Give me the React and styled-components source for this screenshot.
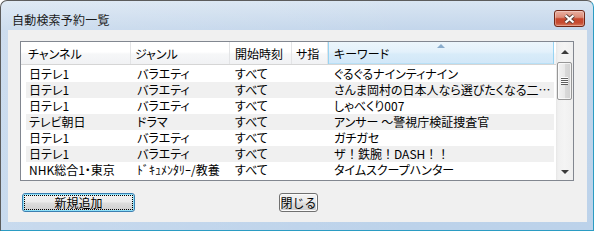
import React from "react";
import styled, { createGlobalStyle } from "styled-components";

const GlobalStyle = createGlobalStyle`
  html, body { margin: 0; padding: 0; background: #ffffff; }
  body {
    font-family: "Noto Sans CJK JP", "Noto Sans", sans-serif;
    font-size: 12px;
    color: #000;
  }
  * { box-sizing: border-box; }
`;

const Window = styled.div`
  width: 594px;
  height: 231px;
  border: 1px solid;
  border-color: #5c5c5c #2b9cc3 #2b9cc3 #5c5c5c;
  border-radius: 7px 7px 0 0;
  background:
    linear-gradient(90deg, rgba(255, 255, 255, 0.18) 0%, rgba(255, 255, 255, 0) 70%),
    linear-gradient(180deg, #d9e5f2 0px, #c3d6eb 29px, #bcd2ea 100%);
  display: flex;
  flex-direction: column;
`;

const TitleBar = styled.div`
  height: 29px;
  flex: none;
  display: flex;
  align-items: flex-start;
  justify-content: space-between;
  padding: 0 8px 0 11px;
`;

const TitleText = styled.div`
  margin-top: 10px;
  line-height: 17px;
  font-size: 12px;
  color: #1a1a1a;
  letter-spacing: 0.2px;
`;

const CloseButton = styled.div`
  margin-top: 9px;
  width: 31px;
  height: 17px;
  border: 1px solid #6f2616;
  border-radius: 3px;
  background: linear-gradient(
    180deg,
    #eab0a2 0%,
    #dc8c78 42%,
    #c8472d 52%,
    #c54b31 78%,
    #db7a5e 100%
  );
  box-shadow: inset 0 0 0 1px rgba(255, 255, 255, 0.3);
  display: flex;
  align-items: center;
  justify-content: center;
`;

const ClientWrap = styled.div`
  flex: 1;
  display: flex;
  padding: 0 6px 8px 7px;
`;

const Client = styled.div`
  flex: 1;
  background: #f0f0f0;
  padding: 11px 13px 0 12px;
  display: flex;
  flex-direction: column;
`;

const List = styled.div`
  width: 554px;
  height: 140px;
  flex: none;
  border: 1px solid #828790;
  background: #ffffff;
  display: flex;
`;

const ListBody = styled.div`
  flex: 1;
  display: flex;
  flex-direction: column;
  overflow: hidden;
`;

const COLS_HEADER = "110px 99px 62px 36px 226px";
const COLS_ROW = "105px 99px 62px 36px 226px";

const Header = styled.div`
  height: 23px;
  flex: none;
  display: grid;
  grid-template-columns: ${COLS_HEADER};
  background: linear-gradient(180deg, #ffffff 0%, #ffffff 45%, #f6f7f8 55%, #f1f2f4 100%);
  border-bottom: 1px solid #d5d5d5;
  margin-bottom: 1px;
`;

const HeaderCell = styled.div`
  position: relative;
  display: flex;
  align-items: center;
  padding-left: ${(p) => p.$pad}px;
  border-right: 1px solid #e3e4e6;
  white-space: nowrap;
  overflow: hidden;
  font-feature-settings: "palt";
  ${(p) =>
    p.$active &&
    `
    border-right: none;
    background: linear-gradient(180deg, #ecf6fc 0%, #e3f1fb 45%, #d8ecf9 55%, #d1e7f8 100%);
    box-shadow: inset 1px 0 0 #97d4f3, inset -1px 0 0 #97d4f3, inset 0 -1px 0 #b8e0f6;
  `}
`;

const SortArrow = styled.span`
  position: absolute;
  top: 2px;
  left: 50%;
  transform: translateX(-50%);
  width: 0;
  height: 0;
  border-left: 4px solid transparent;
  border-right: 4px solid transparent;
  border-bottom: 4px solid #8aaccc;
`;

const Rows = styled.div`
  display: flex;
  flex-direction: column;
`;

const Row = styled.div`
  margin-left: 5px;
  width: 528px;
  height: 16px;
  flex: none;
  display: grid;
  grid-template-columns: ${COLS_ROW};
  background: ${(p) => (p.$alt ? "#f0f0f0" : "transparent")};
  line-height: 16px;
`;

const Cell = styled.div`
  padding-left: ${(p) => p.$pad}px;
  white-space: nowrap;
  overflow: hidden;
  font-feature-settings: ${(p) => (p.$fixed ? "normal" : '"palt"')};
`;

const ScrollBar = styled.div`
  width: 17px;
  flex: none;
  display: flex;
  flex-direction: column;
  background: linear-gradient(90deg, #e6e6e6 0px, #f0f0f0 2px, #f4f4f4 50%, #efefef 100%);
`;

const ScrollButton = styled.div`
  height: 17px;
  flex: none;
  display: flex;
  align-items: center;
  justify-content: center;
`;

const Arrow = styled.span`
  width: 0;
  height: 0;
  border-left: 4px solid transparent;
  border-right: 4px solid transparent;
  ${(p) =>
    p.$down
      ? "border-top: 4px solid #3c3c3c; margin-top: 1px;"
      : "border-bottom: 4px solid #3c3c3c; margin-top: 2px;"}
`;

const Thumb = styled.div`
  margin: 3px 1px 0 1px;
  height: 38px;
  flex: none;
  border: 1px solid #979797;
  border-radius: 2px;
  background: linear-gradient(90deg, #f3f3f3 0%, #e9e9e9 50%, #dadada 51%, #d2d2d2 100%);
  box-shadow: inset 0 0 0 1px rgba(255, 255, 255, 0.7);
  display: flex;
  align-items: center;
  justify-content: center;
`;

const Grip = styled.span`
  width: 7px;
  height: 8px;
  background: repeating-linear-gradient(180deg, #fdfdfd 0 1px, #5f5f5f 1px 2px);
`;

const ScrollSpace = styled.div`
  flex: 1;
`;

const ButtonRow = styled.div`
  display: flex;
  margin-top: 12px;
  padding-left: 2px;
`;

const PushButton = styled.button`
  position: relative;
  width: ${(p) => p.$w}px;
  height: 19px;
  margin-left: ${(p) => p.$ml || 0}px;
  padding: 0;
  border: 1px solid ${(p) => (p.$default ? "#3c7fb1" : "#707070")};
  border-radius: 3px;
  background: linear-gradient(180deg, #f2f2f2 0%, #ebebeb 48%, #dddddd 52%, #cfcfcf 100%);
  box-shadow: inset 0 0 0 1px ${(p) => (p.$default ? "#8fe2fa" : "#fbfbfb")};
  font-family: "Noto Sans CJK JP", "Noto Sans", sans-serif;
  font-size: 12px;
  line-height: 17px;
  color: #000;
  text-align: center;
  ${(p) =>
    p.$default &&
    `
    &::after {
      content: "";
      position: absolute;
      top: 1px; left: 1px; right: 1px; bottom: 1px;
      border: 1px dotted #000;
    }
  `}
`;

const rows = [
  ["日テレ1", "バラエティ", "すべて", "", "ぐるぐるナインティナイン"],
  ["日テレ1", "バラエティ", "すべて", "", "さんま岡村の日本人なら選びたくなる二…"],
  ["日テレ1", "バラエティ", "すべて", "", "しゃべくり007"],
  ["テレビ朝日", "ドラマ", "すべて", "", "アンサー ～警視庁検証捜査官"],
  ["日テレ1", "バラエティ", "すべて", "", "ガチガセ"],
  ["日テレ1", "バラエティ", "すべて", "", "ザ！鉄腕！DASH！！", true],
  ["NHK総合1・東京", "ﾄﾞｷｭﾒﾝﾀﾘｰ/教養", "すべて", "", "タイムスクープハンター"],
];

const headers = [
  { label: "チャンネル", pad: 7 },
  { label: "ジャンル", pad: 4 },
  { label: "開始時刻", pad: 5 },
  { label: "サ指", pad: 4 },
  { label: "キーワード", pad: 6, active: true },
];

const rowPads = [3, 6, 5, 4, 6];

function CloseGlyph() {
  return (
    <svg width="13" height="10" viewBox="0 0 13 10">
      <path d="M2.5 1.5 L10.5 8.5 M10.5 1.5 L2.5 8.5" stroke="#5b403a" strokeWidth="4" />
      <path d="M2.5 1.5 L10.5 8.5 M10.5 1.5 L2.5 8.5" stroke="#ffffff" strokeWidth="2.2" />
    </svg>
  );
}

export default function App() {
  return (
    <>
      <GlobalStyle />
      <Window>
        <TitleBar>
          <TitleText>自動検索予約一覧</TitleText>
          <CloseButton>
            <CloseGlyph />
          </CloseButton>
        </TitleBar>
        <ClientWrap>
          <Client>
            <List>
              <ListBody>
                <Header>
                  {headers.map((h) => (
                    <HeaderCell key={h.label} $pad={h.pad} $active={h.active}>
                      {h.active && <SortArrow />}
                      {h.label}
                    </HeaderCell>
                  ))}
                </Header>
                <Rows>
                  {rows.map((r, i) => (
                    <Row key={i} $alt={i % 2 === 1}>
                      {r.slice(0, 5).map((c, j) => (
                        <Cell key={j} $pad={rowPads[j]} $fixed={j === 4 && r[5]}>
                          {c}
                        </Cell>
                      ))}
                    </Row>
                  ))}
                </Rows>
              </ListBody>
              <ScrollBar>
                <ScrollButton>
                  <Arrow />
                </ScrollButton>
                <Thumb>
                  <Grip />
                </Thumb>
                <ScrollSpace />
                <ScrollButton>
                  <Arrow $down />
                </ScrollButton>
              </ScrollBar>
            </List>
            <ButtonRow>
              <PushButton $w={113} $default>
                新規追加
              </PushButton>
              <PushButton $w={39} $ml={144}>
                閉じる
              </PushButton>
            </ButtonRow>
          </Client>
        </ClientWrap>
      </Window>
    </>
  );
}
